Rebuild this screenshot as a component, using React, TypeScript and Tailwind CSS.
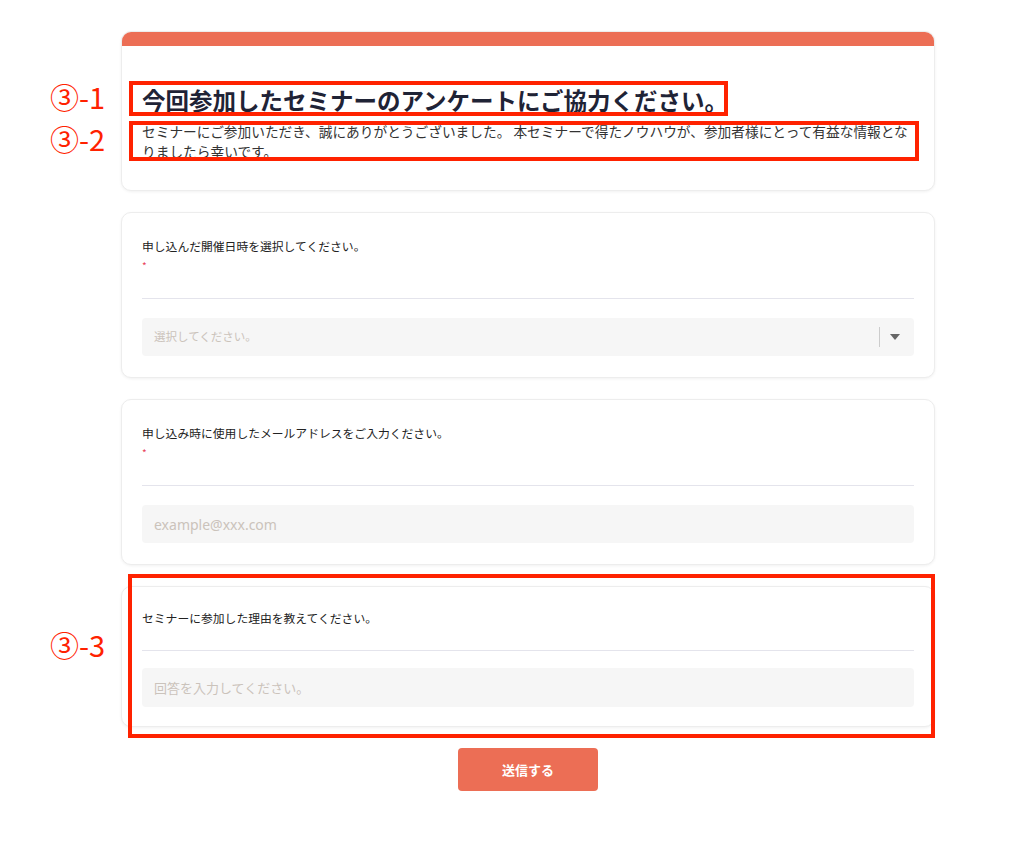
import React from 'react';

const font = { fontFamily: '"Noto Sans CJK JP", "Noto Sans", sans-serif' };

const Card: React.FC<{ children: React.ReactNode }> = ({ children }) => (
  <div className="rounded-[10px] border border-[#ededed] bg-white px-5 shadow-[0_1px_3px_rgba(0,0,0,0.06)]">
    {children}
  </div>
);

const Question: React.FC<{ label: string; required?: boolean; children: React.ReactNode }> = ({
  label,
  required,
  children,
}) => (
  <Card>
    <div className="border-b border-[#e4e4ec] pt-[25px] pb-[24px]">
      <p className="text-[11.8px] leading-4 text-[#222]">{label}</p>
      {required && <p className="mt-1 text-[10px] leading-4 text-[#e8425a]">*</p>}
    </div>
    <div className="pt-[19px] pb-[21px]">{children}</div>
  </Card>
);

const App: React.FC = () => {
  return (
    <div className="relative min-h-[847px] w-[1024px] bg-white" style={font}>
      <div className="ml-[121px] flex w-[814px] flex-col gap-[21px] pt-[31px]">
        {/* Header */}
        <div className="overflow-hidden rounded-[10px] border border-[#ededed] bg-white shadow-[0_1px_3px_rgba(0,0,0,0.06)]">
          <div className="h-[14px] bg-[#ec6e55]" />
          <div className="px-5 pt-[39px] pb-[29px]">
            <h1 className="text-[23.5px] font-bold leading-[30px] text-[#1f2336]">
              今回参加したセミナーのアンケートにご協力ください。
            </h1>
            <p className="mt-[6px] text-[13.7px] leading-5 text-[#333]">
              セミナーにご参加いただき、誠にありがとうございました。 本セミナーで得たノウハウが、参加者様にとって有益な情報となりましたら幸いです。
            </p>
          </div>
        </div>

        <Question label="申し込んだ開催日時を選択してください。" required>
          <div className="flex h-[38px] items-center rounded-[4px] bg-[#f6f6f6] pl-3 pr-[14px]">
            <span className="flex-1 text-[11.5px] text-[#cbc3bb]">選択してください。</span>
            <span className="h-5 w-px bg-[#cccccc]" />
            <svg width="10" height="6" viewBox="0 0 10 6" className="ml-[10px]">
              <path d="M0 0h10L5 6z" fill="#666" />
            </svg>
          </div>
        </Question>

        <Question label="申し込み時に使用したメールアドレスをご入力ください。" required>
          <div className="flex h-[38px] items-center rounded-[4px] bg-[#f6f6f6] px-3">
            <span className="text-[14px] text-[#cbc3bb]" style={{ fontFamily: '"Noto Sans", sans-serif' }}>
              example@xxx.com
            </span>
          </div>
        </Question>

        <Card>
          <div className="border-b border-[#e4e4ec] pt-[23px] pb-[24px]">
            <p className="text-[11.8px] leading-4 text-[#222]">セミナーに参加した理由を教えてください。</p>
          </div>
          <div className="pt-[17px] pb-[19px]">
            <div className="flex h-[39px] items-center rounded-[4px] bg-[#f6f6f6] px-3">
              <span className="text-[13px] text-[#cbc3bb]">回答を入力してください。</span>
            </div>
          </div>
        </Card>

        <div className="flex justify-center">
          <button className="h-[43px] w-[140px] rounded-[4px] bg-[#ec6e55] text-[13px] font-bold text-white">
            送信する
          </button>
        </div>
      </div>

      {/* Annotations */}
      <div className="absolute left-[129px] top-[81px] h-[35px] w-[599px] border-4 border-[#ff2200]" />
      <div className="absolute left-[129px] top-[121px] h-[40px] w-[790px] border-4 border-[#ff2200]" />
      <div className="absolute left-[128px] top-[574px] h-[164px] w-[807px] border-4 border-[#ff2200]" />
      <span className="absolute left-[50px] top-[79px] text-[29px] leading-[34px] text-[#ff2200]">③-1</span>
      <span className="absolute left-[50px] top-[121px] text-[29px] leading-[34px] text-[#ff2200]">③-2</span>
      <span className="absolute left-[50px] top-[627px] text-[29px] leading-[34px] text-[#ff2200]">③-3</span>
    </div>
  );
};

export default App;
